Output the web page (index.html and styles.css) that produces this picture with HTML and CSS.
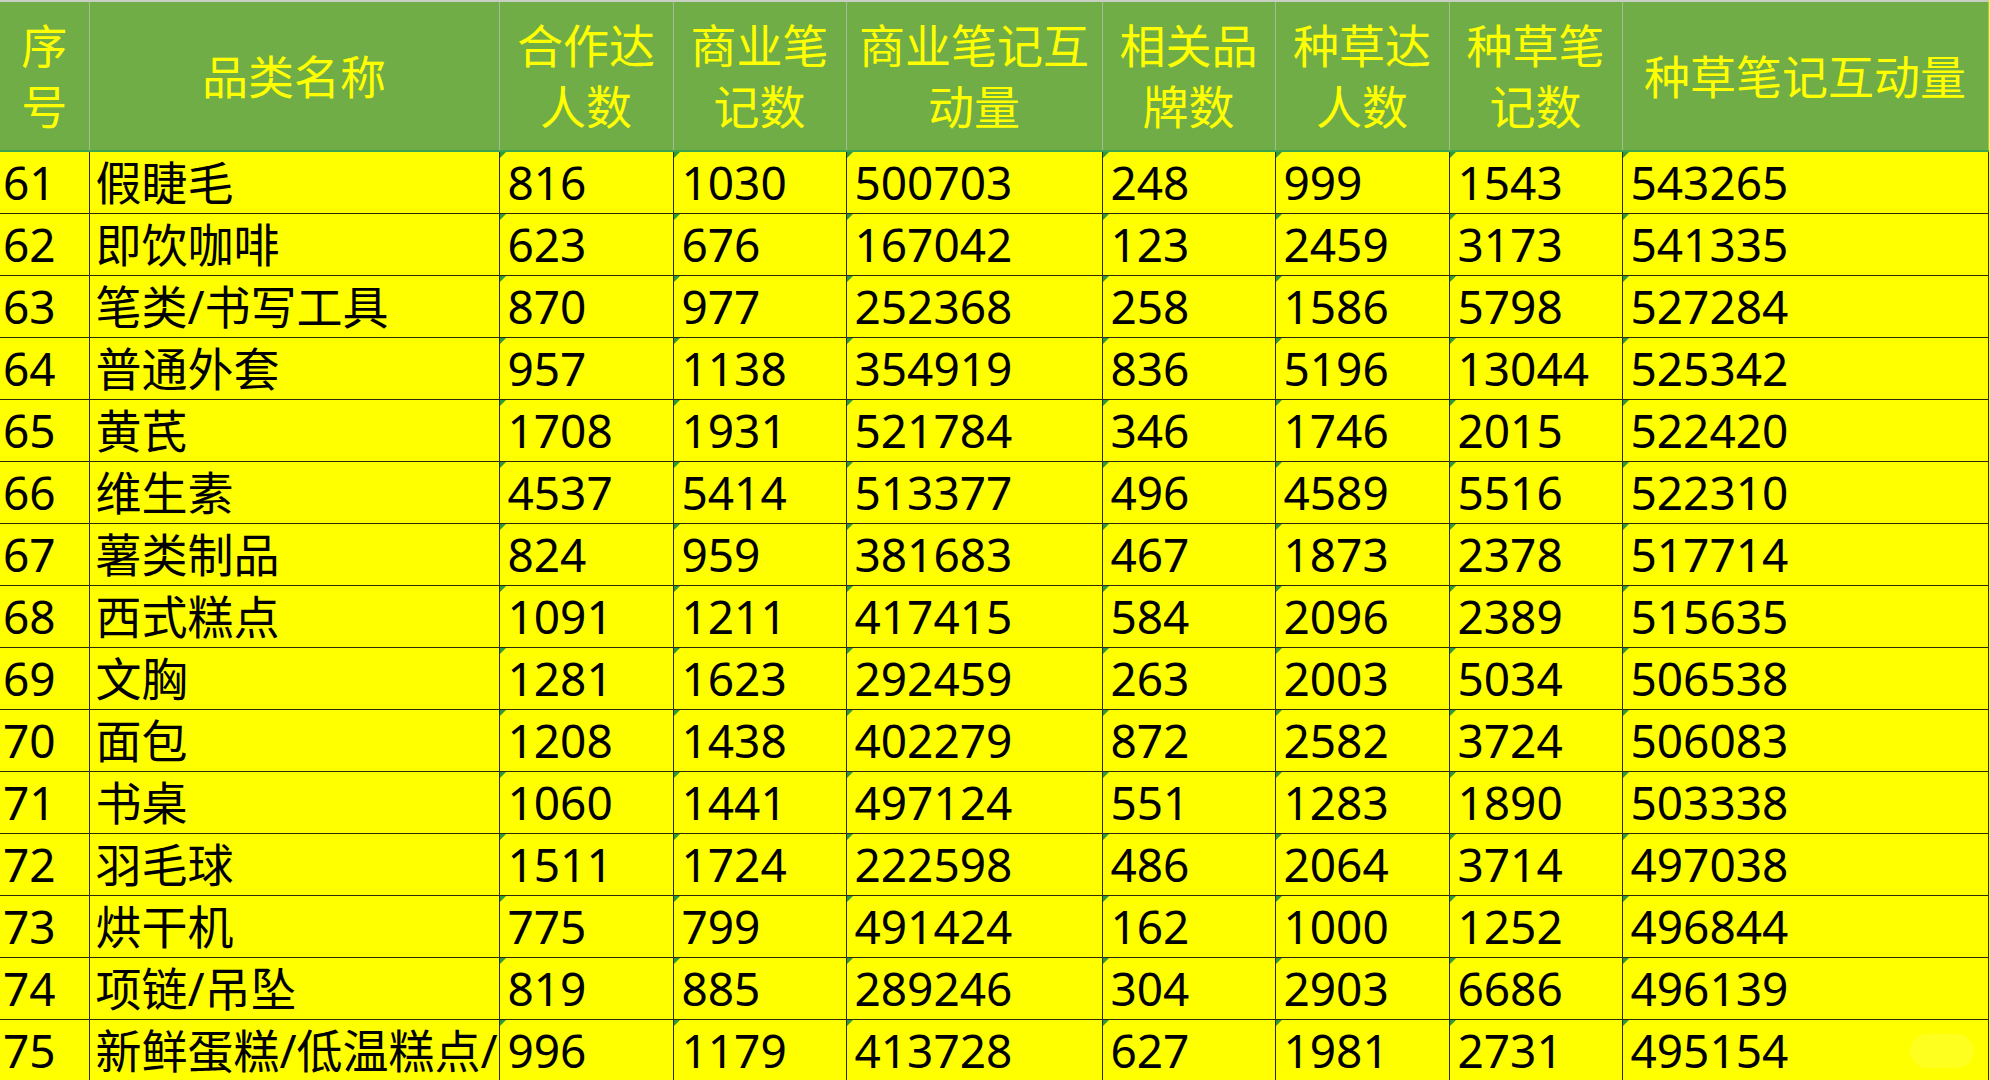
FILE: index.html
```html
<!DOCTYPE html>
<html lang="zh-CN">
<head>
<meta charset="utf-8">
<title>品类数据</title>
<link rel="stylesheet" href="styles.css">
</head>
<body>
<div class="sheet">
<table class="grid">
  <colgroup>
    <col class="c1"><col class="c2"><col class="c3"><col class="c4"><col class="c5"><col class="c6"><col class="c7"><col class="c8"><col class="c9">
  </colgroup>
  <thead>
    <tr>
      <th>序号</th><th>品类名称</th><th>合作达人数</th><th>商业笔记数</th><th>商业笔记互动量</th><th>相关品牌数</th><th>种草达人数</th><th>种草笔记数</th><th>种草笔记互动量</th>
    </tr>
  </thead>
  <tbody>
    <tr><td>61</td><td>假睫毛</td><td class="num">816</td><td class="num">1030</td><td class="num">500703</td><td class="num">248</td><td class="num">999</td><td class="num">1543</td><td class="num">543265</td></tr>
    <tr><td>62</td><td>即饮咖啡</td><td class="num">623</td><td class="num">676</td><td class="num">167042</td><td class="num">123</td><td class="num">2459</td><td class="num">3173</td><td class="num">541335</td></tr>
    <tr><td>63</td><td>笔类/书写工具</td><td class="num">870</td><td class="num">977</td><td class="num">252368</td><td class="num">258</td><td class="num">1586</td><td class="num">5798</td><td class="num">527284</td></tr>
    <tr><td>64</td><td>普通外套</td><td class="num">957</td><td class="num">1138</td><td class="num">354919</td><td class="num">836</td><td class="num">5196</td><td class="num">13044</td><td class="num">525342</td></tr>
    <tr><td>65</td><td>黄芪</td><td class="num">1708</td><td class="num">1931</td><td class="num">521784</td><td class="num">346</td><td class="num">1746</td><td class="num">2015</td><td class="num">522420</td></tr>
    <tr><td>66</td><td>维生素</td><td class="num">4537</td><td class="num">5414</td><td class="num">513377</td><td class="num">496</td><td class="num">4589</td><td class="num">5516</td><td class="num">522310</td></tr>
    <tr><td>67</td><td>薯类制品</td><td class="num">824</td><td class="num">959</td><td class="num">381683</td><td class="num">467</td><td class="num">1873</td><td class="num">2378</td><td class="num">517714</td></tr>
    <tr><td>68</td><td>西式糕点</td><td class="num">1091</td><td class="num">1211</td><td class="num">417415</td><td class="num">584</td><td class="num">2096</td><td class="num">2389</td><td class="num">515635</td></tr>
    <tr><td>69</td><td>文胸</td><td class="num">1281</td><td class="num">1623</td><td class="num">292459</td><td class="num">263</td><td class="num">2003</td><td class="num">5034</td><td class="num">506538</td></tr>
    <tr><td>70</td><td>面包</td><td class="num">1208</td><td class="num">1438</td><td class="num">402279</td><td class="num">872</td><td class="num">2582</td><td class="num">3724</td><td class="num">506083</td></tr>
    <tr><td>71</td><td>书桌</td><td class="num">1060</td><td class="num">1441</td><td class="num">497124</td><td class="num">551</td><td class="num">1283</td><td class="num">1890</td><td class="num">503338</td></tr>
    <tr><td>72</td><td>羽毛球</td><td class="num">1511</td><td class="num">1724</td><td class="num">222598</td><td class="num">486</td><td class="num">2064</td><td class="num">3714</td><td class="num">497038</td></tr>
    <tr><td>73</td><td>烘干机</td><td class="num">775</td><td class="num">799</td><td class="num">491424</td><td class="num">162</td><td class="num">1000</td><td class="num">1252</td><td class="num">496844</td></tr>
    <tr><td>74</td><td>项链/吊坠</td><td class="num">819</td><td class="num">885</td><td class="num">289246</td><td class="num">304</td><td class="num">2903</td><td class="num">6686</td><td class="num">496139</td></tr>
    <tr><td>75</td><td>新鲜蛋糕/低温糕点/</td><td class="num">996</td><td class="num">1179</td><td class="num">413728</td><td class="num">627</td><td class="num">1981</td><td class="num">2731</td><td class="num">495154</td></tr>
  </tbody>
</table>
<div class="mark"></div>
</div>
</body>
</html>
```

FILE: styles.css
```css
html, body {
  margin: 0;
  padding: 0;
  background: #ffff00;
}
.sheet {
  position: relative;
  width: 1990px;
  height: 1080px;
  overflow: hidden;
  background: #ffff00;
}
.grid {
  border-collapse: collapse;
  table-layout: fixed;
  width: 1988px;
  font-family: "Noto Sans", "Noto Sans CJK SC", sans-serif;
  font-size: 46px;
}
.c1 { width: 89px; }
.c2 { width: 410px; }
.c3 { width: 174px; }
.c4 { width: 173px; }
.c5 { width: 256px; }
.c6 { width: 173px; }
.c7 { width: 174px; }
.c8 { width: 173px; }
.c9 { width: 366px; }
.grid th {
  height: 148px;
  padding: 0 4px;
  background: #70ad47;
  color: #ffff00;
  font-weight: normal;
  line-height: 61px;
  text-align: center;
  vertical-align: middle;
  border-top: 2px solid #c8d0c4;
  border-left: 1px solid #a4bc98;
  border-right: 1px solid #a4bc98;
  border-bottom: 2px solid #3fa34d;
}
.grid th:first-child { border-left: none; padding: 0; }
.grid td {
  height: 61px;
  padding: 0 0 0 6px;
  color: #000;
  line-height: 61px;
  white-space: nowrap;
  overflow: hidden;
  text-align: left;
  vertical-align: middle;
  border: 1px solid #2b2b10;
  position: relative;
}
.grid td.num { padding-left: 8px; }
.grid td:first-child { border-left: none; padding-left: 3px; }
.grid td.num::before {
  content: "";
  position: absolute;
  left: 0;
  top: 0;
  border-top: 6px solid #2e9a3c;
  border-right: 6px solid transparent;
}
.mark {
  position: absolute;
  right: 16px;
  bottom: 12px;
  width: 64px;
  height: 34px;
  border-radius: 17px;
  background: rgba(255, 255, 255, 0.12);
}
```
